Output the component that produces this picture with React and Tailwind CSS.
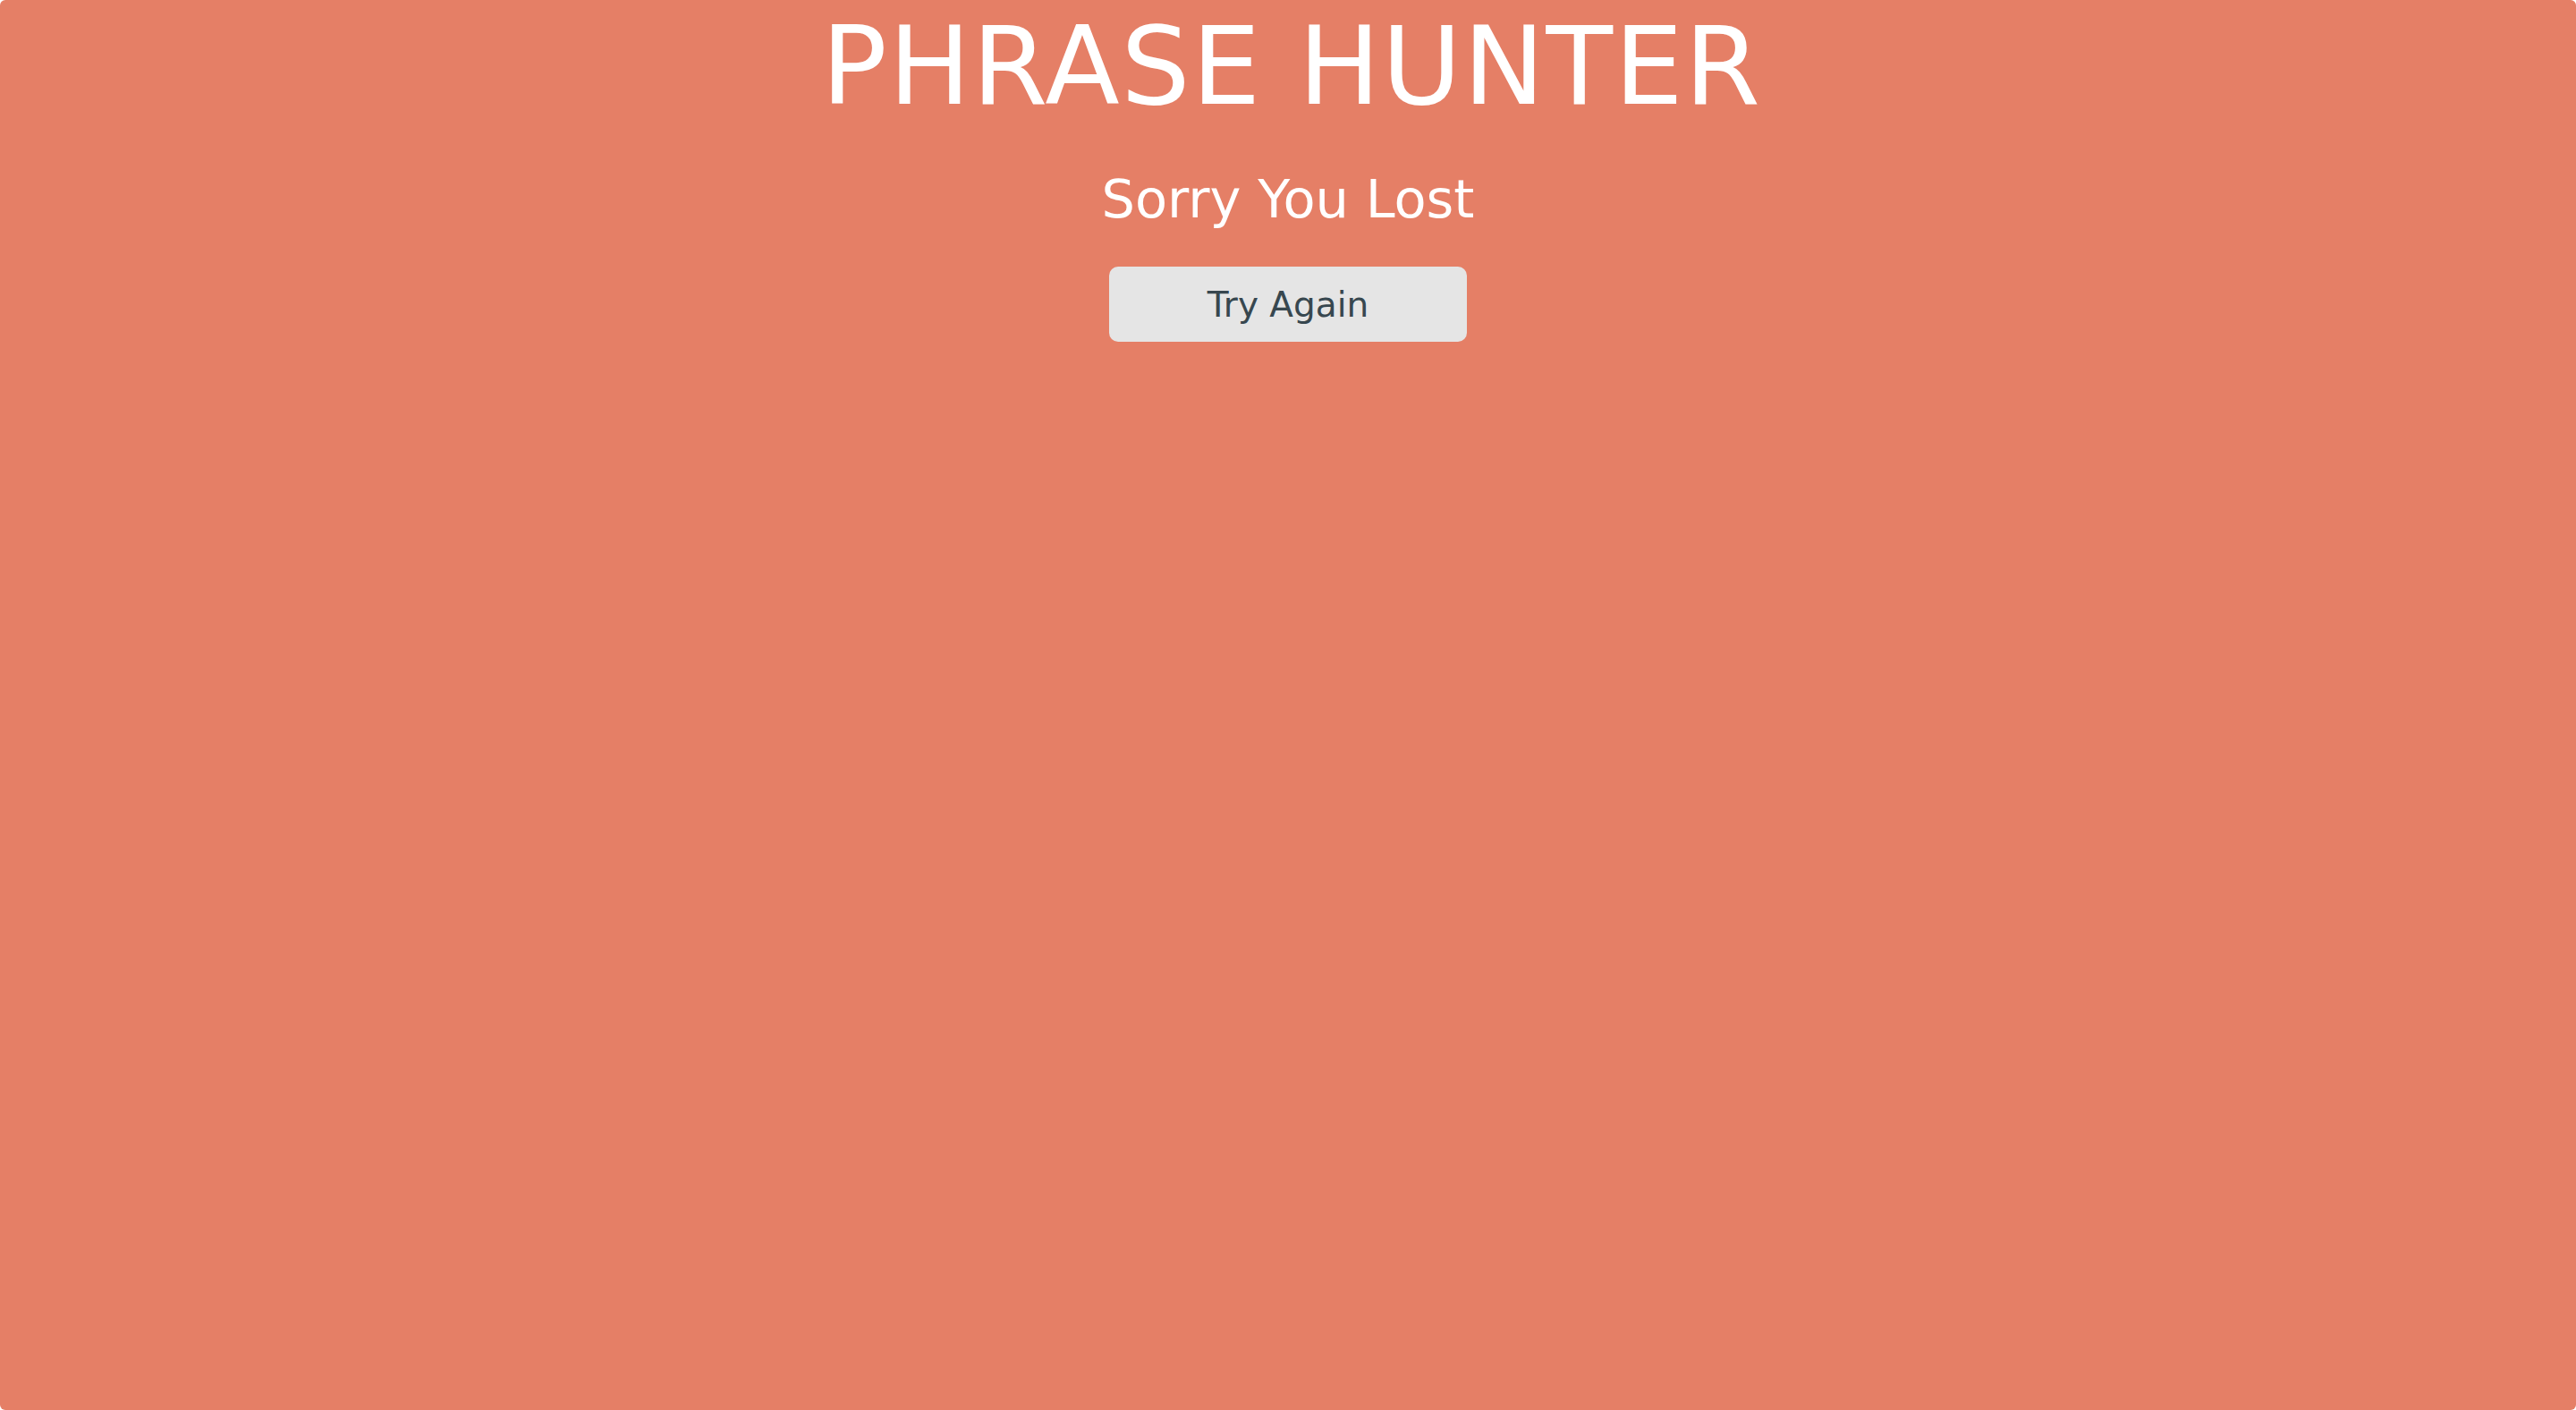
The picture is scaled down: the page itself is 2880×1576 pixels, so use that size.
export default function App() {
    const handleReset = () => {
        window.location.reload();
    };

    return (
        <div className="bg-white min-h-screen">
            <div
                className="min-h-screen bg-[#e57f66] rounded-md flex flex-col items-center text-white"
                style={{fontFamily: '"DejaVu Sans", "Open Sans", sans-serif'}}
            >
                <h1 className="mt-[13px] text-[122px] leading-[122px] font-normal tracking-[1.6px] pl-[8px]">
                    PHRASE HUNTER
                </h1>
                <h2 className="mt-[58px] text-[59px] leading-[59px] font-normal">
                    Sorry You Lost
                </h2>
                <button
                    onClick={handleReset}
                    className="mt-[46px] w-[400px] h-[84px] rounded-[10px] bg-[#e5e5e5] text-[#37474f] text-[39px] leading-[39px] flex items-center justify-center cursor-pointer"
                >
                    Try Again
                </button>
            </div>
        </div>
    );
}
